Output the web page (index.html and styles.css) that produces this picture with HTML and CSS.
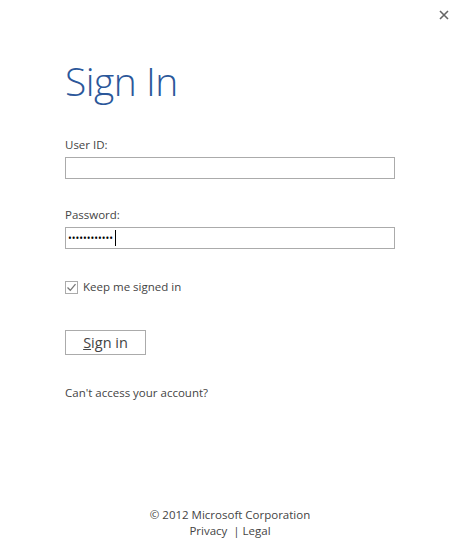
FILE: index.html
```html
<!DOCTYPE html>
<html>
  <head>
    <meta charset="utf-8" />
    <title>Sign In</title>
    <link rel="stylesheet" href="styles.css">
  </head>

  <body>
    <div class="dialog">
      <button class="close" type="button" aria-label="Close">
        <svg width="10" height="10" viewBox="0 0 10 10">
          <path d="M1 1 L9 9 M9 1 L1 9" stroke="#666" stroke-width="1.6" />
        </svg>
      </button>
      <form class="signin">
        <h1>Sign In</h1>
        <label for="user-id">User ID:</label>
        <input type="text" id="user-id" />
        <label for="password">Password:</label>
        <div class="field">
          <input type="password" id="password" value="abcdefghijkl" />
          <span class="caret"></span>
        </div>
        <label class="keep">
          <span class="box">
            <svg width="11" height="11" viewBox="0 0 11 11">
              <path d="M1.5 5.5 L4.3 8.3 L9.5 2.2" fill="none" stroke="#777" stroke-width="1.3" />
            </svg>
          </span>
          Keep me signed in
        </label>
        <button type="submit" class="submit"><u>S</u>ign in</button>
        <a class="help" href="#">Can't access your account?</a>
      </form>
      <div class="footer">
        <div>&copy; 2012 Microsoft Corporation</div>
        <div><a href="#">Privacy</a>&nbsp; | <a href="#">Legal</a></div>
      </div>
    </div>
  </body>
</html>
```

FILE: styles.css
```css
* {
  box-sizing: border-box;
}

html,
body {
  margin: 0;
  padding: 0;
  background: #fff;
}

body {
  font-family: "Open Sans", "Noto Sans", sans-serif;
  font-size: 11.5px;
  color: #444;
}

.dialog {
  display: flex;
  flex-direction: column;
  min-height: 558px;
  padding: 0 65px 19px 65px;
}

.close {
  position: absolute;
  top: 8px;
  right: 10px;
  width: 12px;
  height: 12px;
  padding: 0;
  border: none;
  background: none;
  cursor: pointer;
}

.signin {
  display: flex;
  flex-direction: column;
  align-items: flex-start;
}

h1 {
  margin: 56px 0 0 0;
  font-size: 39px;
  font-weight: 300;
  line-height: 50px;
  color: #2b579a;
  letter-spacing: -0.5px;
}

label {
  margin-top: 28px;
  line-height: 16px;
}

h1 + label {
  margin-top: 31px;
}

.field {
  position: relative;
}

input[type="text"],
input[type="password"] {
  width: 330px;
  height: 22px;
  margin-top: 4px;
  padding: 0 2px;
  border: 1px solid #ababab;
  font-family: inherit;
  font-size: 10px;
  color: #000;
  outline: none;
}

.caret {
  position: absolute;
  left: 50px;
  top: 7px;
  width: 1px;
  height: 16px;
  background: #000;
}

.keep {
  display: flex;
  align-items: center;
  gap: 5px;
  margin-top: 30px;
}

.box {
  display: flex;
  align-items: center;
  justify-content: center;
  width: 13px;
  height: 13px;
  border: 1px solid #ababab;
}

.submit {
  margin-top: 35px;
  width: 81px;
  height: 25px;
  padding: 0;
  border: 1px solid #ababab;
  background: #fff;
  font-family: inherit;
  font-size: 14.5px;
  color: #444;
  cursor: pointer;
}

.submit u {
  text-decoration-thickness: 1px;
}

a {
  color: #444;
  text-decoration: none;
}

a:hover {
  text-decoration: underline;
}

.help {
  margin-top: 30px;
}

.footer {
  margin-top: auto;
  text-align: center;
  line-height: 16px;
}
```
